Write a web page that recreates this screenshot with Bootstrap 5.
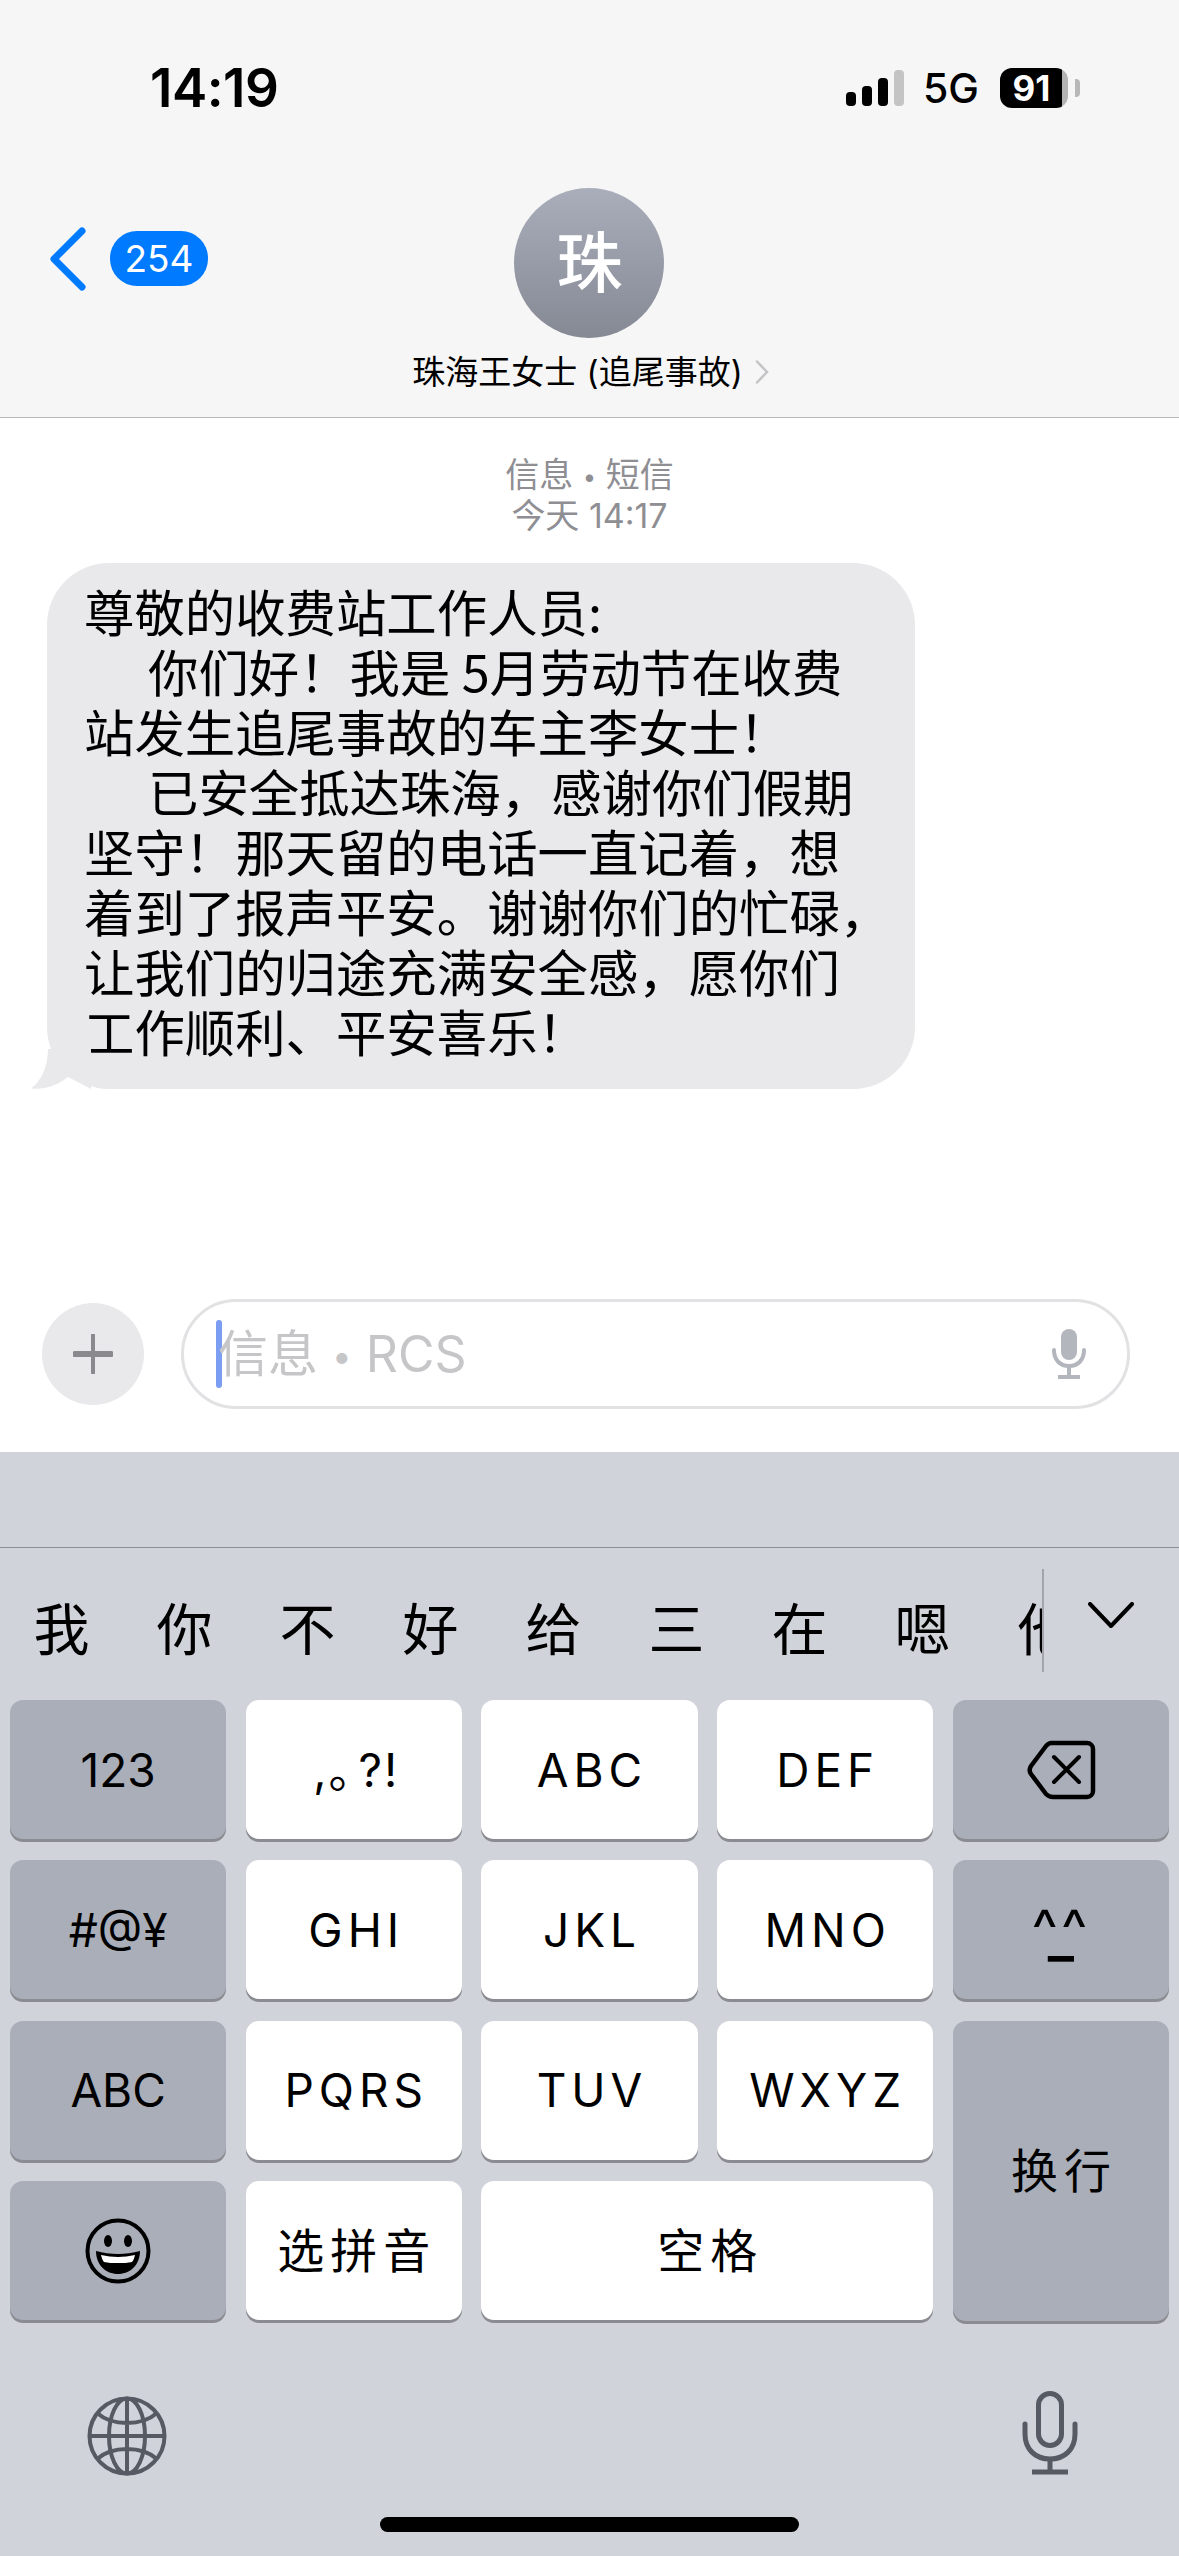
<!DOCTYPE html>
<html lang="zh-CN">
<head>
<meta charset="UTF-8">
<title>信息</title>
<link href="https://cdn.jsdelivr.net/npm/bootstrap@5.3.3/dist/css/bootstrap.min.css" rel="stylesheet">
<style>
html, body { margin: 0; width: 1179px; height: 2556px; overflow: hidden; }
body { background: #fff; color: #000; font-family: "Inter", "Noto Sans CJK SC", sans-serif; }
.phone { width: 1179px; height: 2556px; }

/* top bar */
.top-bar { height: 418px; background: #f6f6f6; border-bottom: 1px solid #b9b9b9; flex: none; }
.status-row { height: 40px; margin-top: 68px; padding: 0 99px 0 150px; }
.clock { font-size: 53px; font-weight: 600; line-height: 40px; letter-spacing: -.5px; }
.signal { height: 36px; gap: 6px; margin-right: 19px; }
.signal i { width: 10px; background: #000; border-radius: 4px; display: block; }
.signal i:nth-child(1) { height: 14px; }
.signal i:nth-child(2) { height: 20px; }
.signal i:nth-child(3) { height: 28px; }
.signal i:nth-child(4) { height: 36px; background: #c4c4c4; }
.net { font-size: 41px; font-weight: 500; line-height: 40px; margin-right: 21px; }
.batt { width: 68px; height: 40px; border-radius: 12px; background: linear-gradient(90deg, #000 91%, #b4b4b4 91%); color: #fff; font-size: 35px; font-weight: 700; line-height: 40px; text-align: center; padding-right: 5px; }
.batt-tip { width: 5px; height: 18px; background: #b8b8b8; border-radius: 0 4px 4px 0; margin-left: 7px; }
.nav-grid { display: grid; grid-template-columns: 1fr auto 1fr; margin-top: 80px; }
.back-link { padding-left: 49px; gap: 23px; height: 150px; padding-bottom: 9px; }
.count-pill { width: 98px; height: 55px; border-radius: 27px; background: #007aff; color: #fff; font-size: 37px; line-height: 55px; text-align: center; }
.avatar { width: 150px; height: 150px; border-radius: 50%; background: linear-gradient(180deg, #aaaebb, #858994); color: #fff; font-size: 66px; font-weight: 500; line-height: 150px; text-align: center; }
.contact { margin-top: 10px; font-size: 33px; line-height: 48px; white-space: nowrap; gap: 12px; margin-left: 2px; }

/* conversation */
.thread { flex: 1 1 auto; min-height: 0; }
.meta-line { color: #8e8e93; font-size: 34px; line-height: 38.5px; padding-top: 38px; text-align: center; }
.bubble { position: relative; margin: 28px 0 0 47px; width: 868px; height: 526px; background: #e9e9eb; border-radius: 62px; padding: 18px 0 0 37px; font-size: 50.4px; line-height: 60px; white-space: nowrap; font-family: "Noto Sans CJK SC", sans-serif; }
.bubble p { margin: 0; }
.bubble p.ind { text-indent: 64px; }
.tail { position: absolute; left: -16px; bottom: 0; width: 60px; height: 40px; }
.dot-sep { font-size: .7em; vertical-align: .08em; }

/* input */
.composer { height: 163px; padding: 0 49px 33px 42px; gap: 37px; flex: none; }
.plus-btn { width: 102px; height: 102px; border-radius: 50%; background: #e9e9eb; flex: none; }
.input-pill { flex: 1; height: 110px; border: 3px solid #e2e2e4; border-radius: 55px; padding: 0 40px 0 32px; }
.caret-bar { width: 6px; height: 68px; background: #7b9df2; border-radius: 3px; flex: none; }
.hint { color: #c6c6c8; font-size: 50px; line-height: 68px; white-space: nowrap; margin-left: -4px; padding-top: 2px; }

/* keyboard */
.keyboard { height: 1104px; background: #d0d3da; flex: none; }
.kb-top { height: 96px; border-bottom: 1px solid #8f9095; }
.cand-row { height: 152px; padding-top: 4px; }
.cand-list { width: 1042px; overflow: hidden; }
.cand-list span { flex: 0 0 123px; text-align: center; font-size: 56px; line-height: 70px; font-family: "Noto Sans CJK SC", sans-serif; }
.cand-sep { width: 2px; height: 103px; background: #a2a5ac; flex: none; margin-top: -12px; margin-right: 44px; }
.cand-chev { margin-top: -22px; }
.key-grid { display: grid; grid-template-columns: repeat(5, 1fr); grid-auto-rows: 141px; column-gap: 19.5px; row-gap: 19.3px; padding: 0 10px; }
.kb-key { background: #fff; border-radius: 13px; height: 139px; box-shadow: 0 3px 0 #8b8c91; color: #000; font-size: 46px; letter-spacing: 5px; padding: 1px 0 0 5px; white-space: nowrap; }
.kb-key.gray { background: #a9aeb9; letter-spacing: 0; padding-left: 0; }
.kb-key.tight { letter-spacing: 2px; }
.kb-key.tight span { margin-right: -18px; }
.kb-key.tall { grid-row: span 2; height: 300px; padding-bottom: 6px; }
.kb-key.wide { grid-column: span 2; }
.kb-key.kb-cjk { font-family: "Noto Sans CJK SC", sans-serif; font-size: 47px; letter-spacing: 6px; padding-left: 6px; }
.kb-key.kb-cjk:not(.tall) { padding-bottom: 5px; }
.face-eyes { font-size: 56px; line-height: 32px; letter-spacing: 3px; }
.face-mouth { font-size: 56px; font-weight: 600; line-height: 22px; margin-top: -20px; }
.kb-bottom { padding: 0 101px 0 87px; height: 156px; margin-top: 36px; }
.kb-mic { margin-top: -6px; }
.home-bar { width: 419px; height: 15px; background: #000; border-radius: 8px; margin: 3px auto 0; }
</style>
</head>
<body>
<div class="phone d-flex flex-column">

  <!-- barra superior -->
  <header class="top-bar">
    <div class="status-row d-flex align-items-center">
      <div class="clock">14:19</div>
      <div class="ms-auto signal d-flex align-items-end"><i></i><i></i><i></i><i></i></div>
      <div class="net">5G</div>
      <div class="batt">91</div>
      <div class="batt-tip"></div>
    </div>
    <div class="nav-grid">
      <div class="back-link d-flex align-items-center">
        <svg width="38" height="64" viewBox="0 0 38 64"><path d="M33 4 5 32l28 28" fill="none" stroke="#007aff" stroke-width="7" stroke-linecap="round" stroke-linejoin="round"/></svg>
        <div class="count-pill">254</div>
      </div>
      <div class="d-flex flex-column align-items-center">
        <div class="avatar">珠</div>
        <div class="contact d-flex align-items-center">
          <span>珠海王女士 (追尾事故)</span>
          <svg width="14" height="24" viewBox="0 0 14 24"><path d="M2 1.5 12 12 2 22.5" fill="none" stroke="#c4c4c6" stroke-width="2.5" stroke-linecap="round"/></svg>
        </div>
      </div>
      <div></div>
    </div>
  </header>

  <!-- mensajes -->
  <main class="thread">
    <div class="meta-line">信息 <span class="dot-sep">•</span> 短信<br>今天 14:17</div>
    <div class="bubble">
      <p>尊敬的收费站工作人员:</p>
      <p class="ind">你们好！我是 5月劳动节在收费</p>
      <p>站发生追尾事故的车主李女士！</p>
      <p class="ind">已安全抵达珠海，感谢你们假期</p>
      <p>坚守！那天留的电话一直记着，想</p>
      <p>着到了报声平安。谢谢你们的忙碌，</p>
      <p>让我们的归途充满安全感，愿你们</p>
      <p>工作顺利、平安喜乐！</p>
      <svg class="tail" viewBox="0 0 60 40"><path d="M17 0C17 18 10 32 0 39.6 14 41 27 36 37 28L60 40V0Z" fill="#e9e9eb"/></svg>
    </div>
  </main>

  <!-- entrada -->
  <div class="composer d-flex align-items-center">
    <div class="plus-btn d-flex align-items-center justify-content-center">
      <svg width="40" height="40" viewBox="0 0 40 40"><path d="M20 1v38" stroke="#8a8a8e" stroke-width="4" stroke-linecap="round"/><path d="M2 20h36" stroke="#8a8a8e" stroke-width="6" stroke-linecap="round"/></svg>
    </div>
    <div class="input-pill d-flex align-items-center">
      <div class="caret-bar"></div>
      <div class="hint">信息 <span class="dot-sep">•</span> RCS</div>
      <svg class="ms-auto" width="36" height="50" viewBox="0 0 36 50"><rect x="10" y="0" width="16" height="31" rx="8" fill="#b3b6bd"/><path d="M3 21c0 10 6 16 15 16s15-6 15-16" fill="none" stroke="#b3b6bd" stroke-width="4" stroke-linecap="round"/><path d="M18 37v9M7 48h22" stroke="#b3b6bd" stroke-width="4"/></svg>
    </div>
  </div>

  <!-- teclado -->
  <section class="keyboard">
    <div class="kb-top"></div>
    <div class="cand-row d-flex align-items-center">
      <div class="cand-list d-flex">
        <span>我</span><span>你</span><span>不</span><span>好</span><span>给</span><span>三</span><span>在</span><span>嗯</span><span>他</span>
      </div>
      <div class="cand-sep"></div>
      <svg class="cand-chev" width="46" height="26" viewBox="0 0 46 26"><path d="M2 2 23 24 44 2" fill="none" stroke="#000" stroke-width="4" stroke-linecap="round" stroke-linejoin="round"/></svg>
    </div>
    <div class="key-grid">
      <div class="kb-key gray d-flex align-items-center justify-content-center">123</div>
      <div class="kb-key tight d-flex align-items-center justify-content-center"><div>,<span>。</span>?!</div></div>
      <div class="kb-key d-flex align-items-center justify-content-center">ABC</div>
      <div class="kb-key d-flex align-items-center justify-content-center">DEF</div>
      <div class="kb-key gray d-flex align-items-center justify-content-center">
        <svg width="70" height="60" viewBox="0 0 70 60"><path d="M25 3h36a6 6 0 0 1 6 6v42a6 6 0 0 1-6 6H27c-3 0-5-1-7-3L5 34c-2-3-2-5 0-8L20 6c2-2 3-3 5-3Z" fill="none" stroke="#000" stroke-width="4.5" stroke-linejoin="round"/><path d="M28 17l25 25M53 17 28 42" stroke="#000" stroke-width="4" stroke-linecap="round"/></svg>
      </div>
      <div class="kb-key gray d-flex align-items-center justify-content-center">#@¥</div>
      <div class="kb-key d-flex align-items-center justify-content-center">GHI</div>
      <div class="kb-key d-flex align-items-center justify-content-center">JKL</div>
      <div class="kb-key d-flex align-items-center justify-content-center">MNO</div>
      <div class="kb-key gray d-flex flex-column align-items-center justify-content-center">
        <span class="face-eyes">^^</span><span class="face-mouth">_</span>
      </div>
      <div class="kb-key gray d-flex align-items-center justify-content-center">ABC</div>
      <div class="kb-key d-flex align-items-center justify-content-center">PQRS</div>
      <div class="kb-key d-flex align-items-center justify-content-center">TUV</div>
      <div class="kb-key d-flex align-items-center justify-content-center">WXYZ</div>
      <div class="kb-key gray tall kb-cjk d-flex align-items-center justify-content-center">换行</div>
      <div class="kb-key gray d-flex align-items-center justify-content-center">
        <svg width="66" height="66" viewBox="0 0 66 66"><circle cx="33" cy="33" r="30.5" fill="none" stroke="#000" stroke-width="4"/><ellipse cx="23" cy="23" rx="4" ry="6"/><ellipse cx="43" cy="23" rx="4" ry="6"/><path d="M11 33c7 2 15 3 22 3s15-1 22-3c0 14-10 23-22 23S11 47 11 33Z"/><path d="M16 37c6 1 11 2 17 2s11-1 17-2c-1 4-2 6-3 7-4 1-9 1-14 1s-10 0-14-1c-1-1-2-3-3-7Z" fill="#fff"/></svg>
      </div>
      <div class="kb-key kb-cjk d-flex align-items-center justify-content-center">选拼音</div>
      <div class="kb-key wide kb-cjk d-flex align-items-center justify-content-center">空格</div>
    </div>
    <div class="kb-bottom d-flex align-items-center justify-content-between">
      <svg width="80" height="80" viewBox="0 0 80 80" fill="none" stroke="#565a63" stroke-width="4"><circle cx="40" cy="40" r="37.5"/><ellipse cx="40" cy="40" rx="18" ry="37.5"/><path d="M40 2.5v75M2.5 40h75M10 17c8 7 19 10 30 10s22-3 30-10M10 63c8-7 19-10 30-10s22 3 30 10"/></svg>
      <svg class="kb-mic" width="56" height="84" viewBox="0 0 56 84" fill="none" stroke="#565a63" stroke-width="5"><rect x="16.5" y="2.5" width="23" height="52" rx="11.5"/><path d="M3 33v10c0 15 10 25 25 25s25-10 25-25V33" stroke-linecap="round"/><path d="M28 68v13M10 81h36" stroke-width="5"/></svg>
    </div>
    <div class="home-bar"></div>
  </section>
</div>
</body>
</html>
